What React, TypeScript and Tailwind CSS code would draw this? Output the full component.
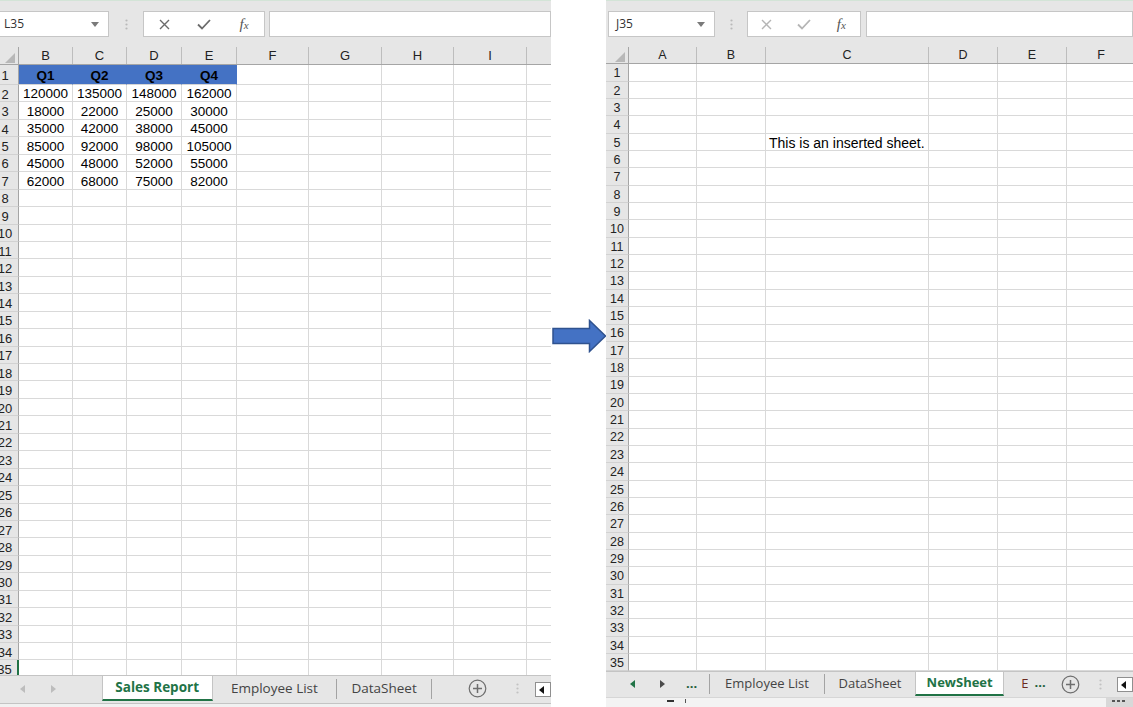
import React from 'react';

type Col = { label: string; w: string };
type CellInfo = { node?: React.ReactNode; fill?: boolean; left?: boolean };

const SALES: string[][] = [
  ['Q1', 'Q2', 'Q3', 'Q4'],
  ['120000', '135000', '148000', '162000'],
  ['18000', '22000', '25000', '30000'],
  ['35000', '42000', '38000', '45000'],
  ['85000', '92000', '98000', '105000'],
  ['45000', '48000', '52000', '55000'],
  ['62000', '68000', '75000', '82000'],
];

const LEFT_COLS: Col[] = [
  { label: 'B', w: 'w-[54px]' },
  { label: 'C', w: 'w-[54px]' },
  { label: 'D', w: 'w-[55px]' },
  { label: 'E', w: 'w-[55px]' },
  { label: 'F', w: 'w-[72px]' },
  { label: 'G', w: 'w-[73px]' },
  { label: 'H', w: 'w-[72px]' },
  { label: 'I', w: 'w-[73px]' },
  { label: '', w: 'w-[32px]' },
];

const RIGHT_COLS: Col[] = [
  { label: 'A', w: 'w-[68px]' },
  { label: 'B', w: 'w-[69px]' },
  { label: 'C', w: 'w-[163px]' },
  { label: 'D', w: 'w-[69px]' },
  { label: 'E', w: 'w-[69px]' },
  { label: 'F', w: 'w-[69px]' },
];

const ROWS = Array.from({ length: 35 }, (_, i) => i + 1);

function Tri({ left, color }: { left?: boolean; color: string }) {
  return (
    <svg width="5" height="8" viewBox="0 0 5 8" className="block">
      <path d={left ? 'M5 0V8L0 4Z' : 'M0 0V8L5 4Z'} fill={color} />
    </svg>
  );
}

function VDots({ color }: { color: string }) {
  return (
    <svg width="3" height="11" viewBox="0 0 3 11" className="block">
      <circle cx="1.5" cy="1.5" r="1.1" fill={color} />
      <circle cx="1.5" cy="5.5" r="1.1" fill={color} />
      <circle cx="1.5" cy="9.5" r="1.1" fill={color} />
    </svg>
  );
}

function AddSheet() {
  return (
    <svg width="19" height="19" viewBox="0 0 19 19" className="block">
      <circle cx="9.5" cy="9.5" r="8.3" fill="none" stroke="#6e6e6e" strokeWidth="1.2" />
      <path d="M9.5 5v9M5 9.5h9" stroke="#6e6e6e" strokeWidth="1.5" />
    </svg>
  );
}

function ScrollBox() {
  return (
    <div className="w-[16px] h-[15px] bg-white border border-[#8f8f8f] flex items-center pl-[3px]">
      <Tri left color="#111" />
    </div>
  );
}

function FormulaBar({
  name,
  nameW,
  namePad,
  dotsW,
  fxW,
  gap,
  dim,
}: {
  name: string;
  nameW: string;
  namePad: string;
  dotsW: string;
  fxW: string;
  gap: string;
  dim?: boolean;
}) {
  const ic = dim ? '#b5b5b5' : '#6b6b6b';
  return (
    <div className="h-[47px] shrink-0 bg-[#e6e6e6] border-t border-[#d3e4d7] pt-[10px] pl-[2px] flex items-start font-['Open_Sans',sans-serif]">
      <div
        className={`${nameW} ${namePad} h-[26px] bg-white border border-[#c6c6c6] flex items-center justify-between pr-[9px] text-[12px] text-[#333]`}
      >
        <span>{name}</span>
        <svg width="8" height="5" viewBox="0 0 8 5">
          <path d="M0 0h8L4 5z" fill="#7a7a7a" />
        </svg>
      </div>
      <div className={`${dotsW} h-[26px] flex items-center justify-center`}>
        <VDots color="#b9b9b9" />
      </div>
      <div className={`${fxW} h-[26px] bg-white border border-[#c6c6c6] grid grid-cols-3 items-center justify-items-center`}>
        <svg width="11" height="11" viewBox="0 0 11 11">
          <path d="M1 1l9 9M10 1l-9 9" stroke={ic} strokeWidth="1.4" />
        </svg>
        <svg width="14" height="11" viewBox="0 0 14 11">
          <path d="M1 5.5l4 4L13 1" fill="none" stroke={ic} strokeWidth="1.8" />
        </svg>
        <span className="font-['Liberation_Serif',serif] italic text-[15px] text-[#555] leading-none">
          f<span className="text-[11px]">x</span>
        </span>
      </div>
      <div className={`flex-1 ${gap} h-[26px] bg-white border border-[#c6c6c6]`} />
    </div>
  );
}

function Grid({
  cols,
  heightCls,
  rowHeadCls,
  headCls,
  firstRowCls,
  rowCls,
  textCls,
  numCls,
  labelCls,
  activeRow,
  cellInfo,
}: {
  cols: Col[];
  heightCls: string;
  rowHeadCls: string;
  headCls: string;
  firstRowCls: string;
  rowCls: string;
  textCls: string;
  numCls: string;
  labelCls: string;
  activeRow?: number;
  cellInfo: (row: number, col: number) => CellInfo | null;
}) {
  return (
    <div className={`${heightCls} shrink-0 overflow-hidden bg-white ${textCls} text-black`}>
      {/* column letters */}
      <div className={`${headCls} flex bg-[#e6e6e6] border-b border-[#a5a5a5]`}>
        <div className={`${rowHeadCls} shrink-0 h-full border-r border-[#a5a5a5] flex items-end justify-end pr-[3px] pb-[1px]`}>
          <svg width="10" height="10" viewBox="0 0 10 10" className="block">
            <path d="M10 0V10H0Z" fill="#b8b8b8" />
          </svg>
        </div>
        {cols.map((c, i) => (
          <div
            key={i}
            className={`${c.w} shrink-0 h-full border-r border-[#bdbdbd] flex items-center justify-center pt-[1px] ${labelCls} text-[#222]`}
          >
            {c.label}
          </div>
        ))}
      </div>

      {ROWS.map((n) => (
        <div key={n} className={`flex ${n === 1 ? firstRowCls : rowCls}`}>
          <div
            className={`${rowHeadCls} shrink-0 h-full bg-[#e6e6e6] border-b border-[#d2d2d2] flex items-center justify-center pt-[2px] leading-none text-[#222] ${numCls} ${
              n === activeRow ? 'border-r-2 border-r-[#217346]' : 'border-r border-r-[#a5a5a5]'
            }`}
          >
            {n}
          </div>
          {cols.map((c, i) => {
            const info = cellInfo(n, i);
            return (
              <div
                key={i}
                className={`${c.w} shrink-0 h-full border-r border-b flex items-center pt-[2px] leading-none whitespace-nowrap ${
                  info?.fill ? 'bg-[#4472c4] border-r-[#4472c4] border-b-[#d4d4d4] font-bold' : 'border-[#d9d9d9]'
                } ${info?.left ? 'justify-start pl-[3px]' : 'justify-center'}`}
              >
                {info?.node}
              </div>
            );
          })}
        </div>
      ))}
    </div>
  );
}

function LeftTabs() {
  return (
    <>
      <div className="h-[29px] shrink-0 bg-[#e6e6e6] border-t border-b border-[#c4c4c4] flex items-start text-[13.5px] font-['Open_Sans',sans-serif] text-[#444]">
        <div className="w-[110px] h-[25px] flex items-center pl-[28px]">
          <Tri left color="#bdbdbd" />
          <span className="ml-[26px]">
            <Tri color="#bdbdbd" />
          </span>
        </div>
        <div className="w-[111px] h-[25px] bg-white border-l border-r border-b-2 border-l-[#c4c4c4] border-r-[#c4c4c4] border-b-[#217346] flex items-center justify-center font-bold text-[#217346]">
          Sales Report
        </div>
        <div className="w-[124px] h-[25px] flex items-center justify-center">Employee List</div>
        <div className="w-px h-[20px] mt-[3px] bg-[#a3a3a3]" />
        <div className="w-[94px] h-[25px] flex items-center justify-center">DataSheet</div>
        <div className="w-px h-[20px] mt-[3px] bg-[#a3a3a3]" />
        <div className="h-[25px] ml-[36px] flex items-center">
          <AddSheet />
        </div>
        <div className="h-[25px] ml-[29px] flex items-center">
          <VDots color="#c2c2c2" />
        </div>
        <div className="h-[25px] ml-[16px] flex items-center pt-[2px]">
          <ScrollBox />
        </div>
      </div>
      <div className="h-[3px] shrink-0 bg-[#f1f1f1]" />
    </>
  );
}

function RightTabs() {
  return (
    <>
      <div className="h-[26px] shrink-0 bg-[#e6e6e6] border-t border-[#c4c4c4] flex items-start text-[13px] font-['Open_Sans',sans-serif] text-[#444]">
        <div className="h-[24px] flex items-center pl-[24px]">
          <Tri left color="#217346" />
          <span className="ml-[25px]">
            <Tri color="#4a4a4a" />
          </span>
          <span className="ml-[21px] w-[12px] font-bold text-[#1d5e3a] leading-none pb-[2px]">...</span>
        </div>
        <div className="w-px h-[20px] mt-[2px] ml-[11px] bg-[#a3a3a3]" />
        <div className="w-[115px] h-[24px] flex items-center justify-center">Employee List</div>
        <div className="w-px h-[20px] mt-[2px] bg-[#a3a3a3]" />
        <div className="w-[91px] h-[24px] flex items-center justify-center">DataSheet</div>
        <div className="w-[90px] h-[24px] bg-white border-l border-r border-b-2 border-l-[#c4c4c4] border-r-[#c4c4c4] border-b-[#217346] flex items-center justify-center font-bold text-[#217346]">
          NewSheet
        </div>
        <div className="w-[27px] h-[24px] ml-[17px] flex items-center text-[#6b2a1f]">
          E<span className="ml-[6px] font-bold text-[#1d5e3a] pb-[2px]">...</span>
        </div>
        <div className="h-[24px] ml-[13px] flex items-center">
          <AddSheet />
        </div>
        <div className="h-[24px] ml-[19px] flex items-center">
          <VDots color="#c2c2c2" />
        </div>
        <div className="h-[24px] ml-[15px] flex items-center pt-[1px]">
          <ScrollBox />
        </div>
      </div>
      {/* status bar, mostly cut off */}
      <div className="h-[10px] shrink-0 bg-[#f3f3f3] border-t border-[#d6d6d6] flex items-start">
        <div className="ml-[61px] mt-[2px] w-[7px] h-[2px] bg-[#333]" />
        <div className="ml-[11px] mt-[1px] w-px h-[4px] bg-[#555]" />
        <div className="flex-1" />
        <div className="w-[27px] h-full bg-[#d8d8d8] flex items-start pt-[2px] pl-[6px] gap-[2px]">
          <div className="w-[3px] h-[2px] bg-[#555]" />
          <div className="w-[3px] h-[2px] bg-[#555]" />
          <div className="w-[3px] h-[2px] bg-[#555]" />
        </div>
      </div>
    </>
  );
}

function Arrow() {
  return (
    <svg width="55" height="34" viewBox="0 0 55 34" className="block">
      <path
        d="M1 9.5H37.5V1.5L53.5 17L37.5 32.5V24.5H1Z"
        fill="#4472c4"
        stroke="#2f528f"
        strokeWidth="1.5"
        strokeLinejoin="miter"
      />
    </svg>
  );
}

function salesCell(row: number, col: number): CellInfo | null {
  if (col > 3 || row > SALES.length) return null;
  return { node: SALES[row - 1][col], fill: row === 1 };
}

function newSheetCell(row: number, col: number): CellInfo | null {
  if (row === 5 && col === 2) return { node: 'This is an inserted sheet.', left: true };
  return null;
}

export default function App() {
  return (
    <div className="flex w-[1133px] h-[707px] bg-white overflow-hidden font-['Liberation_Sans',Arial,sans-serif]">
      {/* Sales Report workbook */}
      <div className="w-[551px] h-full shrink-0 overflow-hidden">
        <div className="w-[559px] h-full -ml-[8px] flex flex-col">
          <FormulaBar
            name="L35"
            nameW="w-[115px]"
            namePad="pl-[9px]"
            dotsW="w-[34px]"
            fxW="w-[122px]"
            gap="ml-[4px]"
          />
          <Grid
            cols={LEFT_COLS}
            heightCls="h-[628px]"
            rowHeadCls="w-[27px]"
            headCls="h-[18px]"
            firstRowCls="h-[20px]"
            rowCls="h-[17.45px]"
            textCls="text-[13.5px]"
            numCls="text-[13px]"
            labelCls="text-[13px]"
            activeRow={35}
            cellInfo={salesCell}
          />
          <LeftTabs />
        </div>
      </div>

      <div className="w-[55px] h-full shrink-0 pt-[319px] pl-[1px]">
        <Arrow />
      </div>

      {/* workbook after the new sheet was added */}
      <div className="w-[527px] h-full shrink-0 overflow-hidden flex flex-col">
        <FormulaBar
          name="J35"
          nameW="w-[107px]"
          namePad="pl-[7px]"
          dotsW="w-[32px]"
          fxW="w-[114px]"
          gap="ml-[5px]"
          dim
        />
        <Grid
          cols={RIGHT_COLS}
          heightCls="h-[624px]"
          rowHeadCls="w-[23px]"
          headCls="h-[17px]"
          firstRowCls="h-[17.7px]"
          rowCls="h-[17.35px]"
          textCls="text-[14px]"
          numCls="text-[12.5px]"
          labelCls="text-[12.5px]"
          cellInfo={newSheetCell}
        />
        <RightTabs />
      </div>
    </div>
  );
}
